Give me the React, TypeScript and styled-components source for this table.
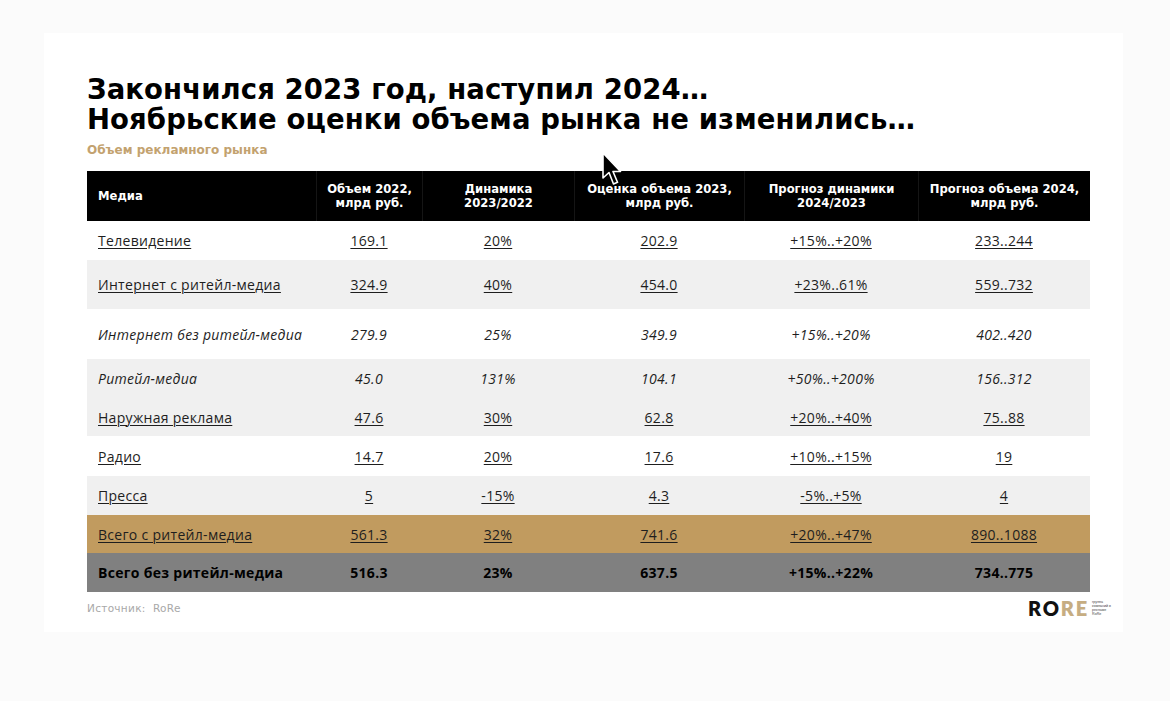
import React from "react";
import styled, { createGlobalStyle } from "styled-components";

const GlobalStyle = createGlobalStyle`
    html, body {
        margin: 0;
        padding: 0;
        background: #fbfbfb;
    }
    #root {
        min-height: 701px;
    }
`;

type Variant = "white" | "grey" | "gold" | "dark";
type Tone = "link" | "italic" | "bold";

const rowBg: Record<Variant, string> = {
    white: "#ffffff",
    grey: "#f0f0f0",
    gold: "#c19b5f",
    dark: "#808080",
};

const COLS = "229px 106px 152px 170px 174px 172px";

const Page = styled.div`
    width: 1170px;
    height: 701px;
    padding: 33px 0 0 44px;
    box-sizing: border-box;
    position: relative;
    overflow: hidden;
`;

const Slide = styled.div`
    width: 1079px;
    height: 599px;
    background: #ffffff;
    box-sizing: border-box;
    padding: 41px 33px 0 43px;
    display: flex;
    flex-direction: column;
`;

const Title = styled.h1`
    margin: 0;
    font-family: "DejaVu Sans", Verdana, sans-serif;
    font-weight: 700;
    font-size: 27.5px;
    line-height: 30px;
    color: #000;
    letter-spacing: 0.1px;
`;

const Subtitle = styled.div`
    margin-top: 9px;
    font-family: "DejaVu Sans", Verdana, sans-serif;
    font-weight: 700;
    font-size: 12px;
    line-height: 14px;
    color: #c3a26f;
`;

const Table = styled.div`
    margin-top: 14px;
    width: 1003px;
    display: flex;
    flex-direction: column;
`;

const HeadRow = styled.div`
    display: grid;
    grid-template-columns: ${COLS};
    height: 50px;
    background: #000;
`;

const HeadCell = styled.div<{ $left?: boolean }>`
    display: flex;
    align-items: center;
    justify-content: ${(p) => (p.$left ? "flex-start" : "center")};
    padding-left: ${(p) => (p.$left ? "11px" : "0")};
    text-align: ${(p) => (p.$left ? "left" : "center")};
    font-family: "DejaVu Sans", Verdana, sans-serif;
    font-weight: 700;
    font-size: 11.6px;
    line-height: 14px;
    color: #fff;
    border-left: ${(p) => (p.$left ? "none" : "1px solid #151515")};
`;

const Row = styled.div<{ $variant: Variant; $h: number }>`
    display: grid;
    grid-template-columns: ${COLS};
    height: ${(p) => p.$h}px;
    background: ${(p) => rowBg[p.$variant]};
`;

const Cell = styled.div<{ $left?: boolean; $tone: Tone }>`
    display: flex;
    align-items: center;
    justify-content: ${(p) => (p.$left ? "flex-start" : "center")};
    padding-left: ${(p) => (p.$left ? "11px" : "0")};
    font-family: "Open Sans", "Noto Sans", sans-serif;
    font-size: 14px;
    letter-spacing: 0.3px;
    font-style: ${(p) => (p.$tone === "italic" ? "italic" : "normal")};
    font-weight: ${(p) => (p.$tone === "bold" ? 700 : 400)};
    text-decoration: ${(p) => (p.$tone === "link" ? "underline" : "none")};
    text-underline-offset: 2px;
    text-decoration-thickness: 1px;
    color: ${(p) => (p.$tone === "bold" ? "#000" : "#1e1e1e")};
`;

const Footer = styled.div`
    width: 1024px;
    margin-top: 5px;
    display: flex;
    justify-content: space-between;
    align-items: center;
`;

const Source = styled.div`
    font-family: "DejaVu Sans", Verdana, sans-serif;
    font-size: 10.5px;
    color: #a8a8a8;
    letter-spacing: 0.3px;
`;

const Logo = styled.div`
    display: flex;
    align-items: center;
    gap: 3px;
`;

const LogoWord = styled.div`
    font-family: "Lato", "Open Sans", sans-serif;
    font-weight: 800;
    font-size: 20px;
    line-height: 22px;
    letter-spacing: 1.8px;
    color: #111;
    span {
        color: #c6ad82;
    }
`;

const LogoNote = styled.div`
    display: flex;
    flex-direction: column;
    font-family: "Liberation Sans", sans-serif;
    font-size: 3.6px;
    line-height: 4px;
    color: #444;
`;

const Cursor = styled.svg`
    position: absolute;
    left: 601px;
    top: 152px;
`;

const rows: {
    cells: string[];
    variant: Variant;
    tone: Tone;
    h: number;
}[] = [
    { cells: ["Телевидение", "169.1", "20%", "202.9", "+15%..+20%", "233..244"], variant: "white", tone: "link", h: 39 },
    { cells: ["Интернет с ритейл-медиа", "324.9", "40%", "454.0", "+23%..61%", "559..732"], variant: "grey", tone: "link", h: 49 },
    { cells: ["Интернет без ритейл-медиа", "279.9", "25%", "349.9", "+15%..+20%", "402..420"], variant: "white", tone: "italic", h: 50 },
    { cells: ["Ритейл-медиа", "45.0", "131%", "104.1", "+50%..+200%", "156..312"], variant: "grey", tone: "italic", h: 39 },
    { cells: ["Наружная реклама", "47.6", "30%", "62.8", "+20%..+40%", "75..88"], variant: "grey", tone: "link", h: 38 },
    { cells: ["Радио", "14.7", "20%", "17.6", "+10%..+15%", "19"], variant: "white", tone: "link", h: 40 },
    { cells: ["Пресса", "5", "-15%", "4.3", "-5%..+5%", "4"], variant: "grey", tone: "link", h: 39 },
    { cells: ["Всего с ритейл-медиа", "561.3", "32%", "741.6", "+20%..+47%", "890..1088"], variant: "gold", tone: "link", h: 38 },
    { cells: ["Всего без ритейл-медиа", "516.3", "23%", "637.5", "+15%..+22%", "734..775"], variant: "dark", tone: "bold", h: 39 },
];

const headers = [
    ["Медиа"],
    ["Объем 2022,", "млрд руб."],
    ["Динамика", "2023/2022"],
    ["Оценка объема 2023,", "млрд руб."],
    ["Прогноз динамики", "2024/2023"],
    ["Прогноз объема 2024,", "млрд руб."],
];

export default function App() {
    return (
        <>
            <GlobalStyle />
            <Page>
                <Slide>
                    <Title>
                        Закончился 2023 год, наступил 2024…
                        <br />
                        Ноябрьские оценки объема рынка не изменились…
                    </Title>
                    <Subtitle>Объем рекламного рынка</Subtitle>

                    <Table>
                        <HeadRow>
                            {headers.map((lines, i) => (
                                <HeadCell key={i} $left={i === 0}>
                                    <div>
                                        {lines.map((l, j) => (
                                            <div key={j}>{l}</div>
                                        ))}
                                    </div>
                                </HeadCell>
                            ))}
                        </HeadRow>
                        {rows.map((r, i) => (
                            <Row key={i} $variant={r.variant} $h={r.h}>
                                {r.cells.map((c, j) => (
                                    <Cell key={j} $left={j === 0} $tone={r.tone}>
                                        {c}
                                    </Cell>
                                ))}
                            </Row>
                        ))}
                    </Table>

                    <Footer>
                        <Source>Источник:&nbsp; RoRe</Source>
                        <Logo>
                            <LogoWord>
                                RO<span>RE</span>
                            </LogoWord>
                            <LogoNote>
                                <div>группа</div>
                                <div>компаний в</div>
                                <div>рекламе</div>
                                <div>RoRe</div>
                            </LogoNote>
                        </Logo>
                    </Footer>
                </Slide>

                {/* mouse pointer captured in the screenshot */}
                <Cursor width="22" height="36" viewBox="0 0 22 36">
                    <path
                        d="M2 1 L2 26 L8 20.5 L12.5 32 L16.5 30.3 L12 19.5 L19.5 19.5 Z"
                        fill="#000"
                        stroke="#fff"
                        strokeWidth="1.6"
                        strokeLinejoin="round"
                    />
                </Cursor>
            </Page>
        </>
    );
}
